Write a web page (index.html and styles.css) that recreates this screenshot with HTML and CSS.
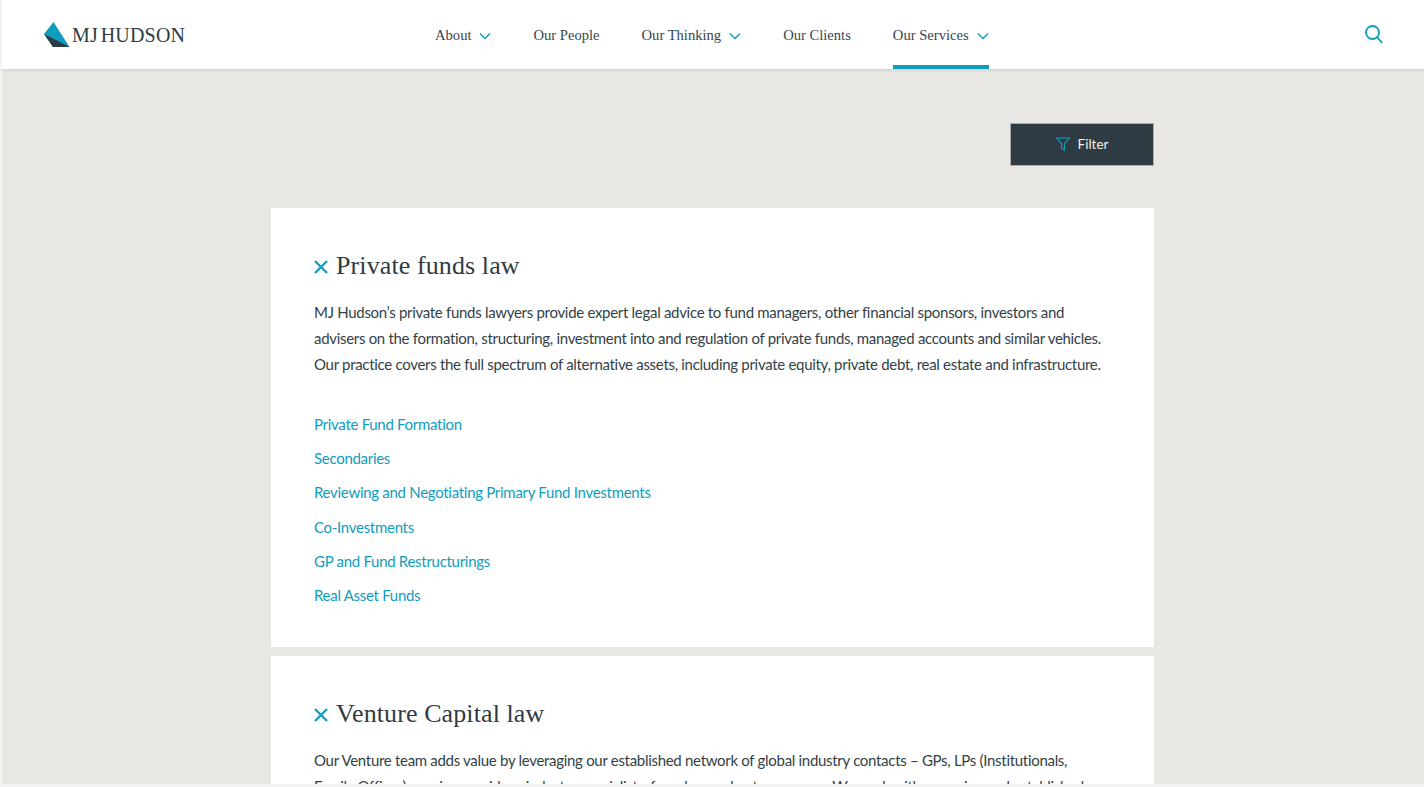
FILE: index.html
```html
<!DOCTYPE html>
<html lang="en">
<head>
    <meta charset="UTF-8">
    <title>MJ Hudson - Our Services</title>
    <link rel="stylesheet" href="styles.css">
</head>
<body>
    <div class="page">
        <header class="site-header">
            <a class="logo" href="#">
                <svg class="logo-mark" width="26" height="26" viewBox="0 0 26 26">
                    <polygon points="0,12 9.500,0 25.500,25 9,25" fill="#0f9dbd"/>
                    <polygon points="0,12 25.500,25 9,25" fill="#2f3b43"/>
                </svg>
                <span class="logo-text">MJ HUDSON</span>
            </a>
            <nav class="main-nav">
                <a class="nav-item" href="#">About
                    <svg class="chevron" width="12" height="8" viewBox="0 0 12 8"><path d="M1 1.500l5 5 5-5"/></svg>
                </a>
                <a class="nav-item" href="#">Our People</a>
                <a class="nav-item" href="#">Our Thinking
                    <svg class="chevron" width="12" height="8" viewBox="0 0 12 8"><path d="M1 1.500l5 5 5-5"/></svg>
                </a>
                <a class="nav-item" href="#">Our Clients</a>
                <a class="nav-item active" href="#">Our Services
                    <svg class="chevron" width="12" height="8" viewBox="0 0 12 8"><path d="M1 1.500l5 5 5-5"/></svg>
                </a>
            </nav>
            <svg class="search-icon" width="18" height="19" viewBox="0 0 18 19">
                <circle cx="7.500" cy="7.500" r="6.500"/>
                <path d="M12.200 12.400l5 5.400"/>
            </svg>
        </header>

        <main class="content">
            <div class="filter-row">
                <button class="filter-btn">
                    <svg width="14" height="14" viewBox="0 0 14 14"><path d="M0.800 1h12.400l-4.800 6v6l-2.800-1.500v-4.500z"/></svg>
                    Filter
                </button>
            </div>

            <section class="card">
                <h2 class="card-title">
                    <svg class="close-icon" width="14" height="14" viewBox="0 0 14 14"><path d="M1 1l12 12M13 1l-12 12"/></svg>
                    Private funds law
                </h2>
                <p class="card-text">MJ Hudson’s private funds lawyers provide expert legal advice to fund managers, other financial sponsors, investors and<br>advisers on the formation, structuring, investment into and regulation of private funds, managed accounts and similar vehicles.<br>Our practice covers the full spectrum of alternative assets, including private equity, private debt, real estate and infrastructure.</p>
                <ul class="service-list">
                    <li><a href="#">Private Fund Formation</a></li>
                    <li><a href="#">Secondaries</a></li>
                    <li><a href="#">Reviewing and Negotiating Primary Fund Investments</a></li>
                    <li><a href="#">Co-Investments</a></li>
                    <li><a href="#">GP and Fund Restructurings</a></li>
                    <li><a href="#">Real Asset Funds</a></li>
                </ul>
            </section>

            <section class="card">
                <h2 class="card-title">
                    <svg class="close-icon" width="14" height="14" viewBox="0 0 14 14"><path d="M1 1l12 12M13 1l-12 12"/></svg>
                    Venture Capital law
                </h2>
                <p class="card-text">Our Venture team adds value by leveraging our established network of global industry contacts – GPs, LPs (Institutionals,<br>Family Offices), service providers, industry specialists, founders and entrepreneurs. We work with emerging and established</p>
            </section>
        </main>
    </div>
</body>
</html>
```

FILE: styles.css
```css
* { box-sizing: border-box; }
html, body { height: 100%; }
body { margin: 0; background: #f2f2f1; font-family: "Lato", sans-serif; color: #333f47; overflow: hidden; }
a { text-decoration: none; color: inherit; }

.page { height: 784px; margin-left: 2px; background: #e8e7e3; overflow: hidden; }

.site-header { display: flex; align-items: center; height: 69px; padding: 0 41px 0 42px; background: #fff; box-shadow: 0 1px 4px rgba(0, 0, 0, 0.12); position: relative; }
.logo { display: flex; align-items: center; gap: 2px; width: 391px; }
.logo-mark { display: block; }
.logo-text { font-family: "Liberation Serif", serif; font-size: 20px; letter-spacing: 0.200px; word-spacing: -2.500px; padding-top: 2px; color: #2f3b43; }

.main-nav { display: flex; gap: 42px; height: 69px; }
.nav-item { display: flex; align-items: center; gap: 8px; height: 69px; font-family: "Liberation Serif", serif; font-size: 14.600px; color: #3a464e; border-bottom: 4px solid transparent; padding-top: 6px; }
.nav-item.active { border-bottom-color: #0f9dbd; }
.chevron { fill: none; stroke: #0f9dbd; stroke-width: 1.500; }
.search-icon { margin-left: auto; fill: none; stroke: #0f9dbd; stroke-width: 1.800; }

.content { width: 883px; margin-left: 269px; padding-top: 54px; }
.filter-row { display: flex; justify-content: flex-end; margin-bottom: 42px; }
.filter-btn { display: flex; align-items: center; justify-content: center; gap: 8px; width: 144px; height: 43px; padding: 0 0 2px; background: #2f3b43; border: 1px solid #a9adaf; color: #f1f1f1; font-family: "Lato", sans-serif; font-size: 13.500px; }
.filter-btn svg { fill: none; stroke: #0f9dbd; stroke-width: 1.200; }

.card { background: #fff; padding: 42px 42px 35px 43px; margin-bottom: 9px; }
.card-title { display: flex; align-items: center; gap: 8px; margin: 0 0 17px; font-family: "Liberation Serif", serif; font-size: 26px; font-weight: 400; line-height: 32px; letter-spacing: 0.100px; color: #2f3b43; }
.close-icon { fill: none; stroke: #0f9dbd; stroke-width: 2.300; flex-shrink: 0; margin-top: 2px; }
.card-text { margin: 0; font-size: 15px; line-height: 26px; letter-spacing: -0.300px; white-space: nowrap; }
.service-list { list-style: none; margin: 30px 0 0; padding: 0; }
.service-list li { font-size: 15px; line-height: 34.200px; letter-spacing: -0.290px; color: #0f9dbd; }
```
